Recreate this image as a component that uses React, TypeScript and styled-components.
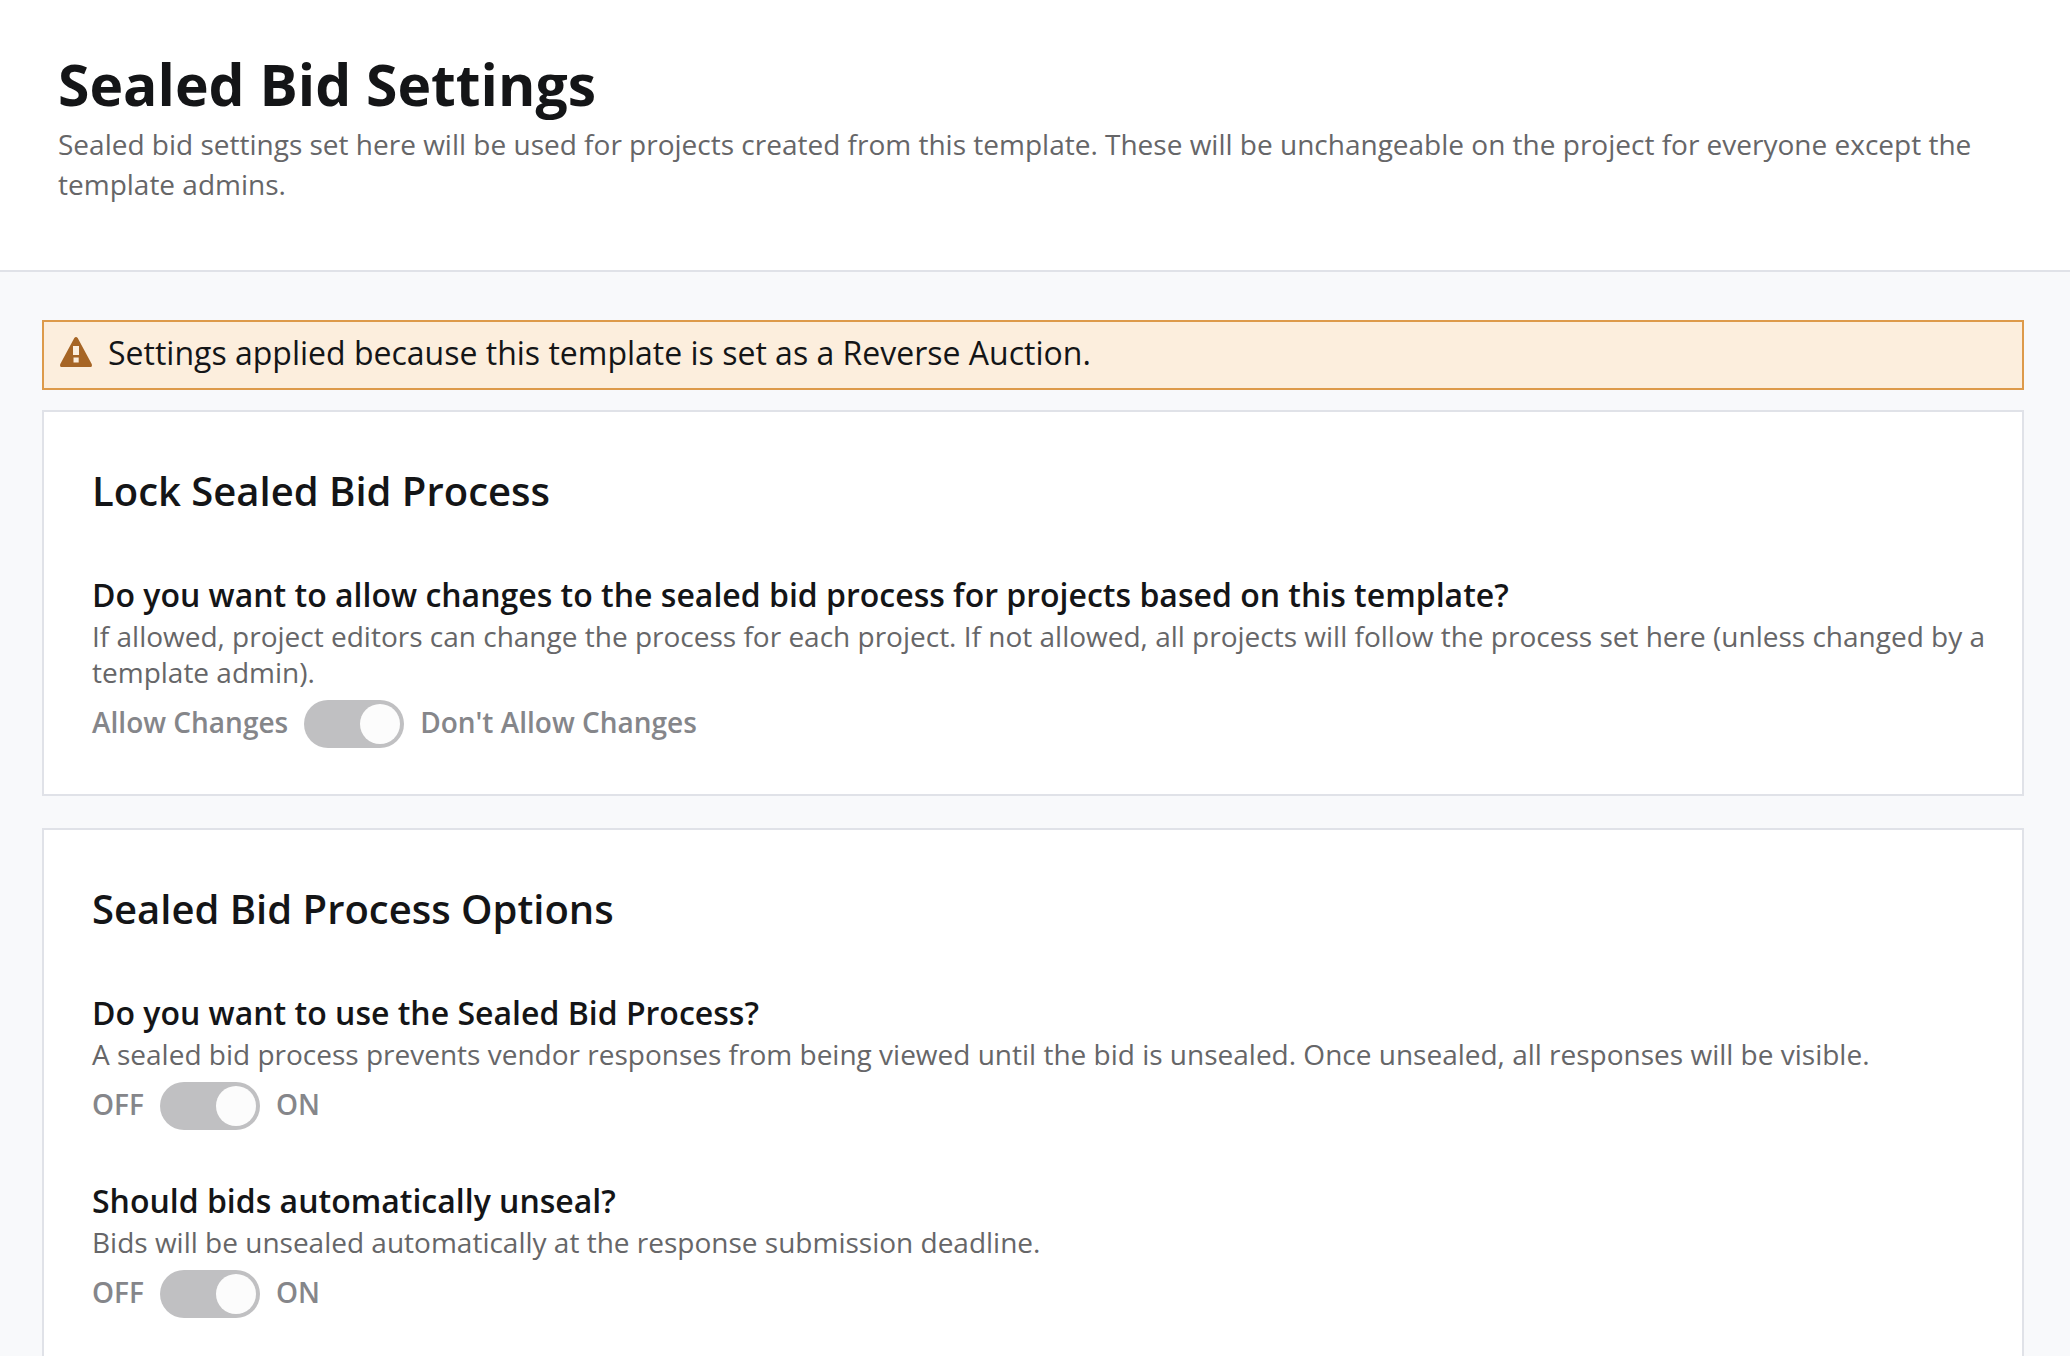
import React, { useId } from "react";
import styled, { createGlobalStyle } from "styled-components";

const color = {
  ink: "#141517",
  muted: "#666668",
  disabledText: "#85868a",
  disabledTrack: "#c0c0c2",
  knob: "#fcfcfc",
  page: "#f8f9fb",
  surface: "#ffffff",
  line: "#e0e2e8",
  warningFill: "#fceedd",
  warningLine: "#dd9a4a",
  warningIcon: "#a66525",
};

const GlobalStyle = createGlobalStyle`
  *, *::before, *::after {
    box-sizing: border-box;
  }

  body {
    margin: 0;
    background: ${color.page};
    color: ${color.ink};
    font-family: "Open Sans", "Noto Sans", sans-serif;
  }
`;

const PageHeader = styled.header`
  padding: 44px 58px 66px;
  background: ${color.surface};
  border-bottom: 2px solid ${color.line};
`;

const PageTitle = styled.h1`
  margin: 0;
  font-size: 57px;
  font-weight: 700;
  line-height: 80px;
`;

const PageSummary = styled.p`
  margin: 0;
  color: ${color.muted};
  font-size: 28px;
  line-height: 40px;
`;

const Content = styled.main`
  display: flex;
  flex-direction: column;
  padding: 48px 46px 32px 42px;
`;

const Banner = styled.div`
  display: flex;
  align-items: flex-start;
  gap: 16px;
  margin-bottom: 20px;
  padding: 10px 16px 14px;
  background: ${color.warningFill};
  border: 2px solid ${color.warningLine};
  font-size: 32px;
  line-height: 42px;
`;

const BannerText = styled.p`
  margin: 0;
`;

const WarningMark = styled.svg`
  flex: none;
  width: 32px;
  height: 30px;
  margin-top: 5px;
  fill: ${color.warningIcon};
`;

const CardList = styled.div`
  display: flex;
  flex-direction: column;
  gap: 32px;
`;

const Card = styled.section`
  padding: 49px 32px 46px 48px;
  background: ${color.surface};
  border: 2px solid ${color.line};
`;

const CardTitle = styled.h2`
  margin: 0 0 52px;
  font-size: 40px;
  font-weight: 600;
  line-height: 60px;
`;

const SettingList = styled.div`
  display: flex;
  flex-direction: column;
  gap: 49px;
`;

const Question = styled.h3`
  margin: 0 0 1px;
  font-size: 32px;
  font-weight: 600;
  line-height: 44px;
`;

const Hint = styled.p`
  margin: 0 0 10px;
  color: ${color.muted};
  font-size: 28px;
  line-height: 36px;
`;

const SwitchRow = styled.label`
  display: flex;
  align-items: flex-start;
  gap: 16px;
  width: fit-content;
  color: ${color.disabledText};
  font-size: 28px;
  font-weight: 600;
  line-height: 44px;
`;

const Switch = styled.input`
  appearance: none;
  display: flex;
  flex: none;
  justify-content: flex-start;
  width: 100px;
  height: 48px;
  margin: 0;
  padding: 4px;
  background: ${color.disabledTrack};
  border-radius: 24px;

  &:checked {
    justify-content: flex-end;
  }

  &::before {
    content: "";
    width: 40px;
    height: 40px;
    background: ${color.knob};
    border-radius: 50%;
  }
`;

function WarningIcon() {
  return (
    <WarningMark viewBox="0 0 32 30" aria-hidden="true">
      <path
        fillRule="evenodd"
        d="M14.3 1Q16 -1 17.7 1L31.7 27Q32.6 30 30.4 30H1.6Q-0.6 30 0.3 27ZM13 9V18H19V9ZM13.5 20.5V25.5H18.7V20.5Z"
      />
    </WarningMark>
  );
}

type SettingProps = {
  question: string;
  hint: string;
  off: string;
  on: string;
};

function Setting({ question, hint, off, on }: SettingProps) {
  const id = useId();
  return (
    <div>
      <Question id={`${id}-question`}>{question}</Question>
      <Hint id={`${id}-hint`}>{hint}</Hint>
      <SwitchRow htmlFor={id}>
        <span>{off}</span>
        <Switch
          id={id}
          type="checkbox"
          role="switch"
          defaultChecked
          disabled
          aria-labelledby={`${id}-question`}
          aria-describedby={`${id}-hint`}
        />
        <span>{on}</span>
      </SwitchRow>
    </div>
  );
}

const sections: { title: string; settings: SettingProps[] }[] = [
  {
    title: "Lock Sealed Bid Process",
    settings: [
      {
        question:
          "Do you want to allow changes to the sealed bid process for projects based on this template?",
        hint: "If allowed, project editors can change the process for each project. If not allowed, all projects will follow the process set here (unless changed by a template admin).",
        off: "Allow Changes",
        on: "Don't Allow Changes",
      },
    ],
  },
  {
    title: "Sealed Bid Process Options",
    settings: [
      {
        question: "Do you want to use the Sealed Bid Process?",
        hint: "A sealed bid process prevents vendor responses from being viewed until the bid is unsealed. Once unsealed, all responses will be visible.",
        off: "OFF",
        on: "ON",
      },
      {
        question: "Should bids automatically unseal?",
        hint: "Bids will be unsealed automatically at the response submission deadline.",
        off: "OFF",
        on: "ON",
      },
    ],
  },
];

export default function App() {
  return (
    <>
      <GlobalStyle />
      <PageHeader>
        <PageTitle>Sealed Bid Settings</PageTitle>
        <PageSummary>
          Sealed bid settings set here will be used for projects created from this template. These
          will be unchangeable on the project for everyone except the template admins.
        </PageSummary>
      </PageHeader>
      <Content>
        <Banner role="status">
          <WarningIcon />
          <BannerText>
            Settings applied because this template is set as a Reverse Auction.
          </BannerText>
        </Banner>
        <CardList>
          {sections.map((section) => (
            <Card key={section.title}>
              <CardTitle>{section.title}</CardTitle>
              <SettingList>
                {section.settings.map((setting) => (
                  <Setting key={setting.question} {...setting} />
                ))}
              </SettingList>
            </Card>
          ))}
        </CardList>
      </Content>
    </>
  );
}
